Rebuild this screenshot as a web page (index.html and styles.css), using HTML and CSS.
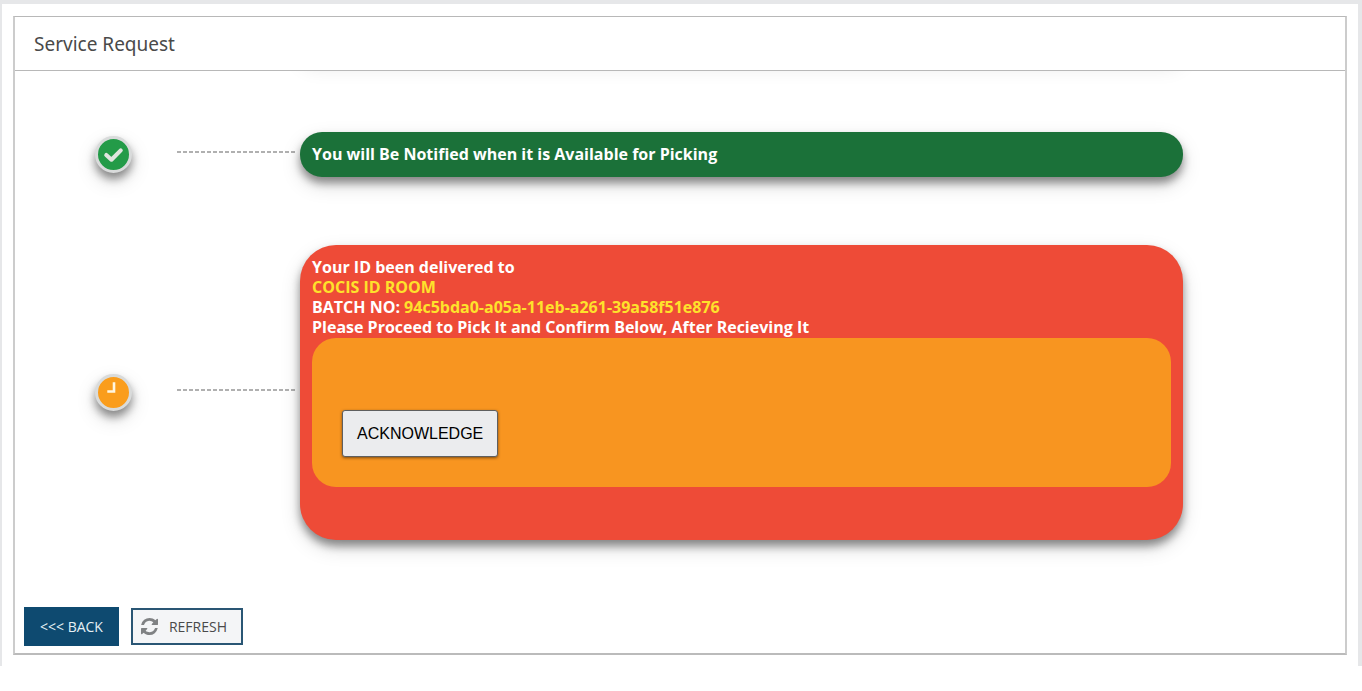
FILE: index.html
```html
<!DOCTYPE html>
<html lang="en">
<head>
  <meta charset="UTF-8">
  <meta name="viewport" content="width=device-width, initial-scale=1.0">
  <title>Service Request</title>
  <link rel="stylesheet" href="styles.css">
</head>
<body>
  <div class="page">
    <div class="card">
      <main class="panel">
        <h2 class="panel-title">Service Request</h2>

        <ul class="steps">
          <li class="step">
            <span class="step-icon done">
              <svg viewBox="0 0 30 30" aria-hidden="true">
                <path d="M8 15.500 L13 20 L22 11" fill="none" stroke="#dfe5df" stroke-width="4" stroke-linecap="round" stroke-linejoin="round"/>
              </svg>
            </span>
            <span class="connector"></span>
            <div class="step-box step-done">You will Be Notified when it is Available for Picking</div>
          </li>

          <li class="step">
            <span class="step-icon pending">
              <svg viewBox="0 0 30 30" aria-hidden="true">
                <path d="M15.500 5 V14 H9" fill="none" stroke="#fff6e0" stroke-width="2.500"/>
              </svg>
            </span>
            <span class="connector"></span>
            <div class="step-box step-current">
              Your ID been delivered to<br>
              <span class="highlight">COCIS ID ROOM</span><br>
              BATCH NO: <span class="highlight">94c5bda0-a05a-11eb-a261-39a58f51e876</span><br>
              Please Proceed to Pick It and Confirm Below, After Recieving It
              <div class="confirm">
                <button type="button" class="acknowledge">ACKNOWLEDGE</button>
              </div>
            </div>
          </li>
        </ul>

        <div class="actions">
          <button type="button" class="btn btn-back">&lt;&lt;&lt; BACK</button>
          <button type="button" class="btn btn-refresh">
            <svg class="refresh-icon" viewBox="0 0 1536 1536" aria-hidden="true">
              <path fill="#808284" d="M1511 928q0 5-1 7-64 268-268 434.500T764 1536q-146 0-282.500-55T238 1324l-129 129q-19 19-45 19t-45-19-19-45V960q0-26 19-45t45-19h448q26 0 45 19t19 45-19 45l-137 137q71 66 161 102t187 36q134 0 250-65t186-179q11-17 53-117 8-23 30-23h192q13 0 22.500 9.500t9.500 22.500zM1536 128v448q0 26-19 45t-45 19h-448q-26 0-45-19t-19-45 19-45l138-138Q969 256 768 256q-134 0-250 65T332 500q-11 17-53 117-8 23-30 23H50q-13 0-22.500-9.500T18 608v-7q65-268 270-434.500T768 0q146 0 284 55.500T1297 212l130-129q19-19 45-19t45 19 19 45z"/>
            </svg>
            REFRESH
          </button>
        </div>
      </main>
    </div>
  </div>
</body>
</html>
```

FILE: styles.css
```css
* {
  box-sizing: border-box;
}
body {
  margin: 0;
  background-color: #fff;
  font-family: "Open Sans", sans-serif;
}
.page {
  padding: 4px 4px 0 2px;
  background-color: #e6e7e9;
}
.card {
  padding: 12px 11px 11px;
  background-color: #fff;
}
.panel {
  border: 2px solid #ccc;
  border-top: 1px solid #b8b8b8;
  border-bottom-color: #bbb;
}
.panel-title {
  margin: 0;
  padding: 13px 19px 12px;
  border-bottom: 1px solid #b8b8b8;
  color: #4a4a4a;
  font-family: "Noto Sans", sans-serif;
  font-size: 19px;
  font-weight: 400;
  line-height: 28px;
}
.steps {
  position: relative;
  display: flex;
  flex-direction: column;
  gap: 68px;
  margin: 0;
  padding: 61px 162px 67px 80px;
  list-style: none;
  overflow: hidden;
}
/* shadow of the step above the scrolled area */
.steps::before {
  content: "";
  position: absolute;
  top: -40px;
  left: 285px;
  right: 162px;
  height: 30px;
  border-radius: 22px;
  box-shadow: 0 6px 20px rgba(0, 0, 0, 0.1);
}
.step {
  display: flex;
  align-items: center;
}
.step-icon {
  flex: none;
  width: 37px;
  height: 37px;
  border: 3px solid #d9dbdb;
  border-radius: 50%;
  box-shadow: 0 6px 8px rgba(0, 0, 0, 0.4), 0 8px 20px rgba(0, 0, 0, 0.15);
}
.step-icon svg {
  display: block;
}
.done {
  background-color: #239b48;
}
.pending {
  background-color: #fa9d1c;
}
.connector {
  flex: none;
  width: 118px;
  height: 8px;
  margin: 0 5px 0 45px;
  background: repeating-linear-gradient(to right, #b0b0b0 0 4px, transparent 4px 6px) top / 100% 2px no-repeat;
}
.step-box {
  flex: 1;
  min-height: 45px;
  padding: 12px;
  color: #fff;
  font-size: 16px;
  font-weight: 700;
  line-height: 20px;
  box-shadow: 0 6px 8px rgba(0, 0, 0, 0.4), 0 8px 20px rgba(0, 0, 0, 0.15);
}
.step-done {
  border-radius: 22px;
  background-color: #1b7139;
}
.step-current {
  padding-bottom: 53px;
  border-radius: 36px;
  background-color: #ee4b37;
}
.highlight {
  color: #fee22b;
}
.confirm {
  margin-top: 1px;
  padding: 72px 30px 30px;
  border-radius: 24px;
  background-color: #f89520;
}
.acknowledge {
  display: block;
  height: 47px;
  padding: 0 14px;
  border: 1px solid #5f5f5f;
  border-radius: 3px;
  background-color: #ebecee;
  box-shadow: 0 1px 3px rgba(0, 0, 0, 0.5);
  color: #000;
  font-family: "Liberation Sans", Arial, sans-serif;
  font-size: 16px;
}
.actions {
  display: flex;
  align-items: center;
  gap: 12px;
  padding: 0 9px 7px;
}
.btn {
  display: flex;
  align-items: center;
  font-family: inherit;
  font-size: 14px;
  line-height: 20px;
}
.btn-back {
  height: 39px;
  padding: 0 16px;
  border: 0;
  background-color: #0e4a70;
  color: #e6f0f5;
}
.btn-refresh {
  gap: 11px;
  height: 37px;
  padding: 0 14px 0 8px;
  border: 2px solid #2a5674;
  background-color: #f4f5f7;
  color: #4a4a4a;
}
.refresh-icon {
  width: 17px;
  height: 17px;
}
```
